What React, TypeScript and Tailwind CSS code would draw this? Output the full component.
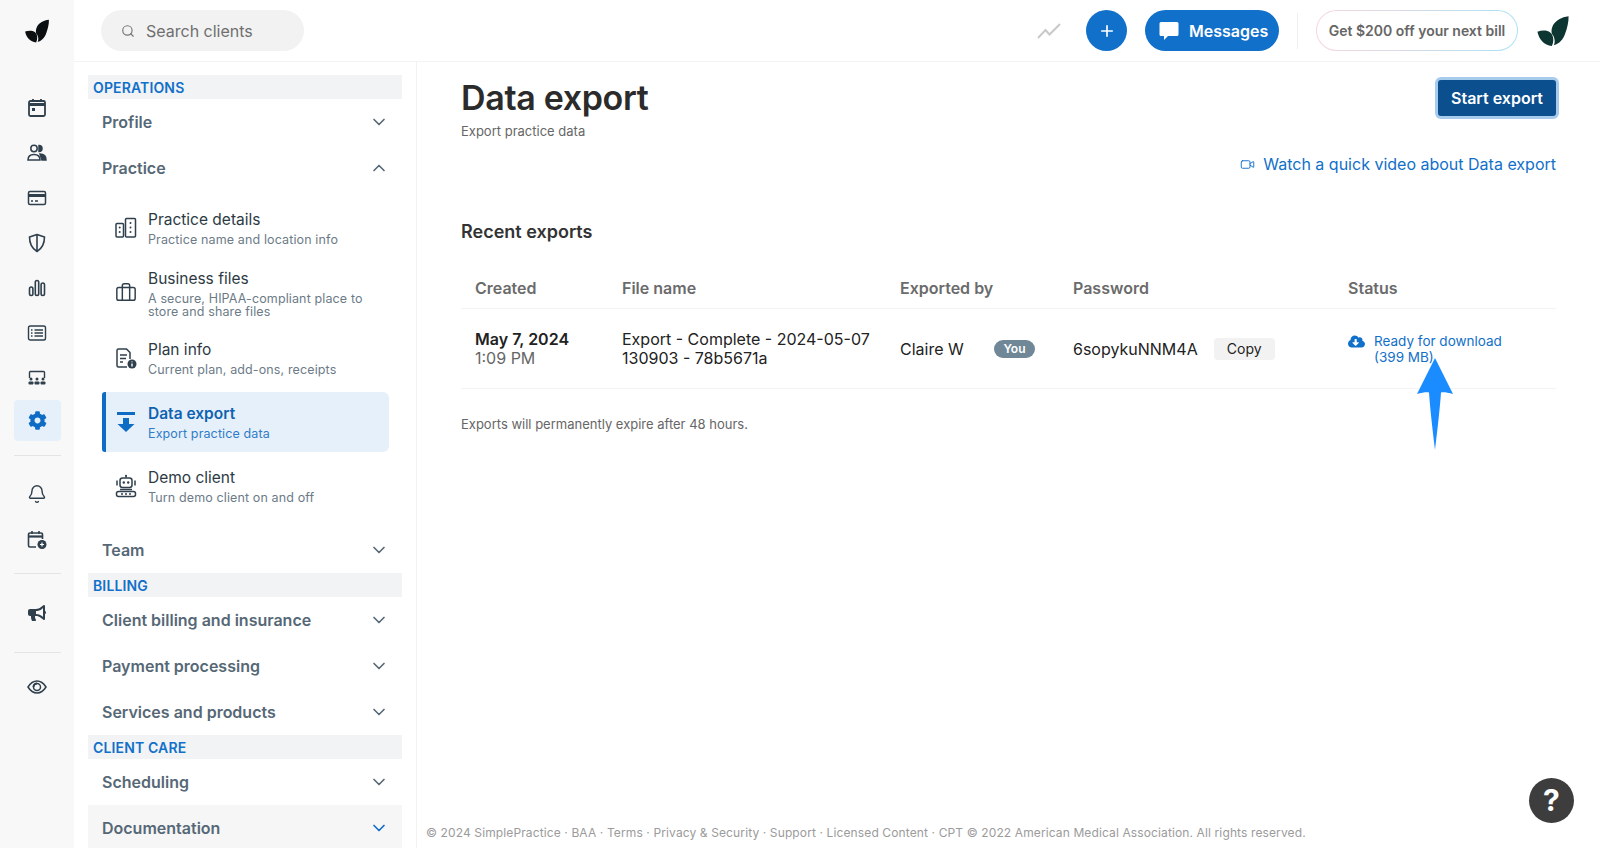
import React from 'react';
import { Search, ChevronDown, ChevronUp, Plus, Bell, Video, Briefcase } from 'lucide-react';
import { FaCog, FaBullhorn, FaCloudDownloadAlt } from 'react-icons/fa';

const INK = '#2f3f4c';

const CalendarIcon = () => (
  <svg width="20" height="20" viewBox="0 0 20 20" fill="none" stroke={INK} strokeWidth="1.8">
    <rect x="2" y="3" width="16" height="15" rx="1.5" />
    <path d="M2 6.500h16" strokeWidth="3" />
    <path d="M6 1v3M14 1v3" />
    <rect x="5" y="10" width="3" height="3" fill={INK} stroke="none" />
  </svg>
);
const PeopleIcon = () => (
  <svg width="20" height="20" viewBox="0 0 20 20" fill="none" stroke={INK} strokeWidth="1.5">
    <circle cx="7" cy="5.500" r="3.200" />
    <path d="M1 17c0-3.500 2.500-5.500 6-5.500s6 2 6 5.500z" />
    <path d="M12 2.500a3 3 0 0 1 0 6z" fill={INK} />
    <path d="M13 11c3.500 0 6 2 6 6h-4z" fill={INK} />
  </svg>
);
const CardIcon = () => (
  <svg width="20" height="20" viewBox="0 0 20 20" fill="none" stroke={INK} strokeWidth="1.5">
    <rect x="1.500" y="3.500" width="17" height="13" rx="1.500" />
    <path d="M1.500 7.500h17" strokeWidth="3" />
    <path d="M4 13h2M8 13h3" />
  </svg>
);
const ShieldIcon = () => (
  <svg width="20" height="20" viewBox="0 0 20 20" fill="none" stroke={INK} strokeWidth="1.6">
    <path d="M10 1.500 2.500 4c0 7 2.500 11.500 7.500 14.500C15 15.500 17.500 11 17.500 4z" strokeLinejoin="round" />
    <path d="M10 1.500v17" />
  </svg>
);
const BarsIcon = () => (
  <svg width="20" height="20" viewBox="0 0 20 20" fill="none" stroke={INK} strokeWidth="1.6">
    <rect x="2.500" y="9" width="3.400" height="8.500" rx="1.700" />
    <rect x="8.300" y="2.500" width="3.400" height="15" rx="1.700" />
    <rect x="14.100" y="5" width="3.400" height="12.500" rx="1.700" />
  </svg>
);
const ListIcon = () => (
  <svg width="20" height="20" viewBox="0 0 20 20" fill="none" stroke={INK} strokeWidth="1.4">
    <rect x="1.500" y="3" width="17" height="14" rx="1.800" />
    <path d="M4 7h1.500M4 10h1.500M4 13h1.500M7.500 7H16M7.500 10H16M7.500 13H16" />
  </svg>
);
const RoomIcon = () => (
  <svg width="20" height="20" viewBox="0 0 20 20" fill="none" stroke={INK} strokeWidth="1.4">
    <path d="M2.500 10V4.500a1 1 0 0 1 1-1h13a1 1 0 0 1 1 1V10" />
    <g fill={INK} stroke="none">
      <circle cx="4" cy="11" r="1.500" /><circle cx="10" cy="11" r="1.500" /><circle cx="16" cy="11" r="1.500" />
      <rect x="1.500" y="13.500" width="5" height="3" rx="1" /><rect x="7.500" y="13.500" width="5" height="3" rx="1" /><rect x="13.500" y="13.500" width="5" height="3" rx="1" />
    </g>
  </svg>
);
const CalPlusIcon = () => (
  <svg width="20" height="20" viewBox="0 0 20 20" fill="none" stroke={INK} strokeWidth="1.6">
    <path d="M9 17H3a1.500 1.500 0 0 1-1.500-1.500v-11A1.500 1.500 0 0 1 3 3h11a1.500 1.500 0 0 1 1.500 1.500V9" />
    <path d="M1.500 6.500h14" strokeWidth="2.200" />
    <path d="M5 1v3M12 1v3" />
    <circle cx="15" cy="14.500" r="4.500" fill={INK} stroke="none" />
    <path d="M15 12.500v4M13 14.500h4" stroke="#fff" strokeWidth="1.200" />
  </svg>
);
const EyeIcon = () => (
  <svg width="20" height="20" viewBox="0 0 20 20" fill="none" stroke={INK} strokeWidth="1.5">
    <path d="M1 10c2.500-4 5.500-6 9-6s6.500 2 9 6c-2.500 4-5.500 6-9 6s-6.500-2-9-6z" />
    <circle cx="10" cy="10" r="3.500" />
    <path d="M10 6.500a3.500 3.500 0 0 0-3.500 3.500" strokeWidth="2" />
  </svg>
);
const Logo = ({ color, size }: { color: string; size: number }) => (
  <svg width={size} height={size} viewBox="0 0 24 24">
    <path d="M23 1.500c-5 .7-9 2.700-11 6.500-1 2-1.300 4-.8 6.200 1 .8 1.800 2.300 2 4.800 0 1-.2 2-.6 3 4-1 6.500-4 8-8.200 1.400-4 2.500-8 2.400-12.300z" fill={color} />
    <path d="M1 12.500c3.500-1.300 7-1 9 .5 1.700 1.300 2.300 3.300 2.200 5.500 0 1.400-.4 2.800-1 4-5.500-.5-9-4.500-10.200-10z" fill={color} />
  </svg>
);
const BuildingIcon = () => (
  <svg width="22" height="22" viewBox="0 0 22 22" fill="none" stroke={INK} strokeWidth="1.500">
    <rect x="1" y="6.500" width="7.500" height="13.500" rx="1" />
    <rect x="10.500" y="1.500" width="10" height="18.500" rx="1" />
    <g fill={INK} stroke="none">
      <circle cx="4.700" cy="10.500" r="1" /><circle cx="4.700" cy="15" r="1" />
      <circle cx="15.500" cy="6" r="1" /><circle cx="15.500" cy="10.500" r="1" /><circle cx="15.500" cy="15" r="1" />
    </g>
  </svg>
);
const PlanIcon = () => (
  <svg width="22" height="22" viewBox="0 0 22 22" fill="none" stroke={INK} strokeWidth="1.500">
    <path d="M12 20H3.500a1.500 1.500 0 0 1-1.500-1.500v-15A1.500 1.500 0 0 1 3.500 2h8L15 5.500V12" />
    <path d="M5 8h7M5 11.500h6M5 15h3" />
    <circle cx="17" cy="17" r="4.500" fill={INK} stroke="none" />
    <path d="M17 16.500v3M17 14.500v.8" stroke="#fff" strokeWidth="1.400" />
  </svg>
);
const ExportIcon = () => (
  <svg width="22" height="24" viewBox="0 0 22 24" fill="#0f6cc4">
    <rect x="2" y="2" width="18" height="3" />
    <path d="M8 8h6v6h5.500L11 22 2.500 14H8z" />
  </svg>
);
const RobotIcon = () => (
  <svg width="22" height="24" viewBox="0 0 22 24" fill="none" stroke={INK} strokeWidth="1.500">
    <path d="M11 1.500v2" />
    <circle cx="11" cy="1.800" r="1" fill={INK} stroke="none" />
    <rect x="5" y="4" width="12" height="9.500" rx="2.500" />
    <circle cx="8.800" cy="8.500" r="1.200" fill={INK} stroke="none" />
    <circle cx="13.200" cy="8.500" r="1.200" fill={INK} stroke="none" />
    <path d="M2 6.500v5M20 6.500v5" />
    <path d="M5 15.500h12" />
    <rect x="1.500" y="17.500" width="19" height="5" rx="2" />
    <path d="M6 20h2M10 20h2M14 20h2" />
  </svg>
);

const railTop = [CalendarIcon, PeopleIcon, CardIcon, ShieldIcon, BarsIcon, ListIcon, RoomIcon];

const Rail = () => (
  <div className="w-[74px] shrink-0 bg-[#f8f8f8] flex flex-col items-center">
    <div className="h-[62px] w-full flex items-center justify-center">
      <Logo color="#0b0f12" size={26} />
    </div>
    <div className="mt-[23px] w-full flex flex-col items-center">
      {railTop.map((Icon, i) => (
        <div key={i} className="h-[45px] w-full flex items-center justify-center"><Icon /></div>
      ))}
      <div className="w-[47px] h-[41px] rounded bg-[#e6f0fa] flex items-center justify-center">
        <FaCog size={19} color="#0f6cc4" />
      </div>
    </div>
    <div className="w-[47px] h-px bg-[#e4e4e4] mt-[14px]" />
    <div className="h-[46px] mt-[15px] flex items-center"><Bell size={20} color={INK} strokeWidth={1.7} /></div>
    <div className="h-[46px] flex items-center"><CalPlusIcon /></div>
    <div className="w-[47px] h-px bg-[#e4e4e4] mt-[10px]" />
    <div className="h-[78px] flex items-center"><FaBullhorn size={18} color={INK} /></div>
    <div className="w-[47px] h-px bg-[#e4e4e4]" />
    <div className="h-[68px] flex items-center"><EyeIcon /></div>
  </div>
);

const SectionLabel = ({ children }: { children: string }) => (
  <div className="h-6 bg-[#f2f3f5] pl-[5px] flex items-center text-[14px] font-semibold text-[#1170c9] uppercase tracking-[0.01em]">{children}</div>
);

const NavRow = ({ label, open, active }: { label: string; open?: boolean; active?: boolean }) => (
  <div className={`h-[46px] pl-[14px] pr-[13px] flex items-center justify-between text-[16px] font-semibold text-[#566876] ${active ? 'bg-[#f6f6f7]' : ''}`}>
    <span>{label}</span>
    {open ? <ChevronUp size={20} color="#566876" strokeWidth={2} /> : <ChevronDown size={20} color={active ? '#0f6cc4' : '#566876'} strokeWidth={2} />}
  </div>
);

const SubItem = ({ icon, title, sub, active, tall }: { icon: React.ReactNode; title: string; sub: string; active?: boolean; tall?: boolean }) => (
  <div className={`${tall ? 'h-[62px]' : 'h-[60px]'} flex items-center rounded-r-md rounded-l-[3px] ${active ? 'bg-[#e6f0fa] border-l-4 border-[#0f6cc4] pl-[9px]' : 'pl-[13px]'}`}>
    <div className="w-[22px] h-6 flex items-center justify-center shrink-0">{icon}</div>
    <div className="ml-[11px] pr-4">
      <div className={`text-[15.5px] leading-5 ${active ? 'font-semibold text-[#0f62b0]' : 'text-[#2d3a44]'}`}>{title}</div>
      <div className={`text-[12.5px] leading-[13px] mt-[3px] tracking-[0.01em] ${active ? 'text-[#2f7cc7]' : 'text-[#6c7b87]'}`}>{sub}</div>
    </div>
  </div>
);

const Sidebar = () => (
  <div className="w-[343px] shrink-0 border-r border-[#f3f3f3] pl-[14px] pr-[14px] pt-[13px] overflow-hidden">
    <SectionLabel>Operations</SectionLabel>
    <NavRow label="Profile" />
    <NavRow label="Practice" open />
    <div className="pt-[7px] pb-[11px] pl-[14px] pr-[13px] flex flex-col gap-1">
      <SubItem icon={<BuildingIcon />} title="Practice details" sub="Practice name and location info" />
      <SubItem icon={<Briefcase size={22} color={INK} strokeWidth={1.6} />} title="Business files" sub="A secure, HIPAA-compliant place to store and share files" tall />
      <SubItem icon={<PlanIcon />} title="Plan info" sub="Current plan, add-ons, receipts" />
      <SubItem icon={<ExportIcon />} title="Data export" sub="Export practice data" active />
      <SubItem icon={<RobotIcon />} title="Demo client" sub="Turn demo client on and off" />
    </div>
    <NavRow label="Team" />
    <SectionLabel>Billing</SectionLabel>
    <NavRow label="Client billing and insurance" />
    <NavRow label="Payment processing" />
    <NavRow label="Services and products" />
    <SectionLabel>Client care</SectionLabel>
    <NavRow label="Scheduling" />
    <NavRow label="Documentation" active />
  </div>
);

const Header = () => (
  <div className="h-[62px] shrink-0 border-b border-[#f3f3f3] flex items-center pl-[27px] pr-[30px]">
    <div className="w-[203px] h-[41px] rounded-full bg-[#f2f2f2] flex items-center pl-[20px] text-[16px] text-[#6f6f6f]">
      <Search size={14} color="#777" strokeWidth={2} />
      <span className="ml-[11px]">Search clients</span>
    </div>
    <div className="ml-auto flex items-center">
      <svg width="24" height="16" viewBox="0 0 24 16" fill="none" stroke="#c9c9c9" strokeWidth="2">
        <path d="M1 15 8.500 7l4 4.500L23 1" />
      </svg>
      <div className="ml-[25px] w-[41px] h-[41px] rounded-full bg-[#1170c9] flex items-center justify-center">
        <Plus size={18} color="#fff" strokeWidth={2.2} />
      </div>
      <div className="ml-[18px] w-[134px] h-[41px] rounded-full bg-[#1170c9] flex items-center pl-[14px] text-[16px] font-semibold text-white">
        <svg width="20" height="20" viewBox="0 0 20 20" fill="#fff">
          <path d="M2 1h16a1.500 1.500 0 0 1 1.500 1.500v11A1.500 1.500 0 0 1 18 15H9l-4 4v-4H2A1.500 1.500 0 0 1 .500 13.500v-11A1.500 1.500 0 0 1 2 1z" />
        </svg>
        <span className="ml-[10px]">Messages</span>
      </div>
      <div className="ml-[18px] w-px h-[36px] bg-[#efefef]" />
      <div className="ml-[18px] w-[202px] h-[41px] rounded-full border border-transparent [background:linear-gradient(#fff,#fff)_padding-box,linear-gradient(90deg,#f9d5db,#a9e2f5)_border-box] flex items-center justify-center text-[14px] font-semibold text-[#666]">
        Get $200 off your next bill
      </div>
      <div className="ml-[18px]"><Logo color="#0d3531" size={34} /></div>
    </div>
  </div>
);

const HeadCell = ({ children }: { children: string }) => (
  <div className="text-[16px] font-semibold text-[#6b6b6b]">{children}</div>
);

const ExportTable = () => (
  <div className="mt-[24px]">
    <div className="grid grid-cols-[147px_278px_173px_275px_1fr] pl-[14px] h-[41px] items-center border-b border-[#f3f3f3]">
      <HeadCell>Created</HeadCell>
      <HeadCell>File name</HeadCell>
      <HeadCell>Exported by</HeadCell>
      <HeadCell>Password</HeadCell>
      <HeadCell>Status</HeadCell>
    </div>
    <div className="grid grid-cols-[147px_278px_173px_275px_1fr] pl-[14px] h-[80px] items-center border-b border-[#f3f3f3] text-[16px] text-[#222]">
      <div className="leading-[19px]">
        <div className="font-semibold">May 7, 2024</div>
        <div className="text-[#666]">1:09 PM</div>
      </div>
      <div className="leading-[19px]">Export - Complete - 2024-05-07<br />130903 - 78b5671a</div>
      <div className="flex items-center">
        <span className="w-[94px]">Claire W</span>
        <span className="h-[18px] w-[41px] rounded-full bg-[#6f8796] text-white text-[12px] font-semibold flex items-center justify-center">You</span>
      </div>
      <div className="flex items-center">
        <span>6sopykuNNM4A</span>
        <span className="ml-4 w-[61px] h-[22px] rounded bg-[#f2f2f2] text-[14px] flex items-center justify-center">Copy</span>
      </div>
      <div className="flex items-start text-[13.500px] leading-4 text-[#1170c9]">
        <FaCloudDownloadAlt size={17} color="#1170c9" />
        <span className="ml-[9px]">Ready for download<br />(399 MB)</span>
      </div>
    </div>
  </div>
);

export default function App() {
  return (
    <div className="relative flex h-[848px] w-[1600px] overflow-hidden bg-white font-['Inter','Liberation_Sans',sans-serif]">
      <Rail />
      <div className="flex-1 flex flex-col min-w-0">
        <Header />
        <div className="flex flex-1 min-h-0">
          <Sidebar />
          <div className="flex-1 flex flex-col pl-[44px] pr-[44px] pt-[15px] pb-[7px]">
            <div className="flex items-start justify-between">
              <div>
                <h1 className="text-[34px] leading-[41px] font-semibold text-[#2b2b2b] tracking-[-0.01em]">Data export</h1>
                <div className="text-[13px] leading-5 mt-[3px] text-[#666]">Export practice data</div>
              </div>
              <div className="mt-[3px] w-[118px] h-[36px] rounded-[3px] bg-[#0b4f8e] ring-3 ring-[#a6cbec] flex items-center justify-center text-[16px] font-semibold text-white">Start export</div>
            </div>
            <div className="mt-[11px] flex justify-end items-center text-[16px] text-[#1170c9]">
              <Video size={15} color="#1170c9" strokeWidth={1.5} />
              <span className="ml-2">Watch a quick video about Data export</span>
            </div>
            <div className="mt-[44px] text-[18px] leading-6 font-semibold text-[#333]">Recent exports</div>
            <ExportTable />
            <div className="mt-[26px] text-[13px] text-[#666]">Exports will permanently expire after 48 hours.</div>
            <div className="mt-auto -ml-[35px] text-[12px] leading-4 tracking-[0.01em] text-[#9b9b9b]">© 2024 SimplePractice · BAA · Terms · Privacy &amp; Security · Support · Licensed Content · CPT © 2022 American Medical Association. All rights reserved.</div>
          </div>
        </div>
      </div>
      {/* annotation arrow sits over the table */}
      <svg className="absolute left-[1414px] top-[358px]" width="42" height="94" viewBox="0 0 42 94" fill="#1a8cff">
        <path d="M21 0 39 36c-5-1.500-10-2-12-1.500C25.500 55 23 75 21 92 19 75 16.500 55 15 34.500 13 34 8 34.500 3 36z" />
      </svg>
      <div className="absolute left-[1529px] top-[778px] w-[45px] h-[45px] rounded-full bg-[#3d3d3d] flex items-center justify-center text-[30px] font-bold text-white">?</div>
    </div>
  );
}
